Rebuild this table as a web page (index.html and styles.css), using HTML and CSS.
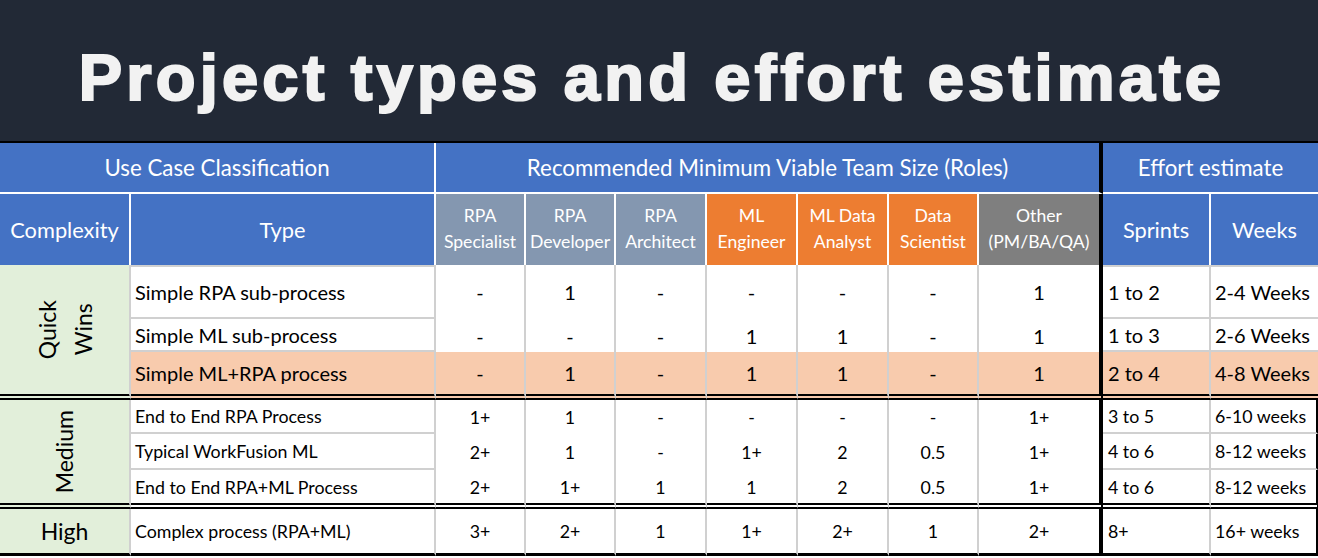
FILE: index.html
```html
<!DOCTYPE html>
<html lang="en">
<head>
<meta charset="utf-8">
<title>Project types and effort estimate</title>
<link rel="stylesheet" href="styles.css">
</head>
<body>
<div class="slide">
  <header class="title-bar">
    <h1 class="title">Project types and effort estimate</h1>
  </header>
  <div class="sheet">
    <div class="hd hd-top hd-class">Use Case Classification</div>
    <div class="hd hd-top hd-team">Recommended Minimum Viable Team Size (Roles)</div>
    <div class="hd hd-top hd-effort">Effort estimate</div>

    <div class="hd hd-sub big">Complexity</div>
    <div class="hd hd-sub big">Type</div>
    <div class="hd hd-sub role rpa">RPA<br>Specialist</div>
    <div class="hd hd-sub role rpa">RPA<br>Developer</div>
    <div class="hd hd-sub role rpa">RPA<br>Architect</div>
    <div class="hd hd-sub role ml">ML<br>Engineer</div>
    <div class="hd hd-sub role ml">ML Data<br>Analyst</div>
    <div class="hd hd-sub role ml">Data<br>Scientist</div>
    <div class="hd hd-sub role oth other">Other<br>(PM/BA/QA)</div>
    <div class="hd hd-sub big">Sprints</div>
    <div class="hd hd-sub big last-col">Weeks</div>

    <div class="cx cx-qw"><span class="vert">Quick<br>Wins</span></div>
    <div class="cx cx-med"><span class="vert">Medium</span></div>
    <div class="cx cx-high">High</div>

    <div class="row first">
      <div class="cell type">Simple RPA sub-process</div>
      <div class="cell">-</div><div class="cell">1</div><div class="cell">-</div><div class="cell">-</div><div class="cell">-</div><div class="cell">-</div><div class="cell other">1</div>
      <div class="cell spr">1 to 2</div><div class="cell wk">2-4 Weeks</div>
    </div>
    <div class="row">
      <div class="cell type">Simple ML sub-process</div>
      <div class="cell">-</div><div class="cell">-</div><div class="cell">-</div><div class="cell">1</div><div class="cell">1</div><div class="cell">-</div><div class="cell other">1</div>
      <div class="cell spr">1 to 3</div><div class="cell wk">2-6 Weeks</div>
    </div>
    <div class="row peach end">
      <div class="cell type">Simple ML+RPA process</div>
      <div class="cell">-</div><div class="cell">1</div><div class="cell">-</div><div class="cell">1</div><div class="cell">1</div><div class="cell">-</div><div class="cell other">1</div>
      <div class="cell spr">2 to 4</div><div class="cell wk">4-8 Weeks</div>
    </div>
    <div class="row small boxed">
      <div class="cell type">End to End RPA Process</div>
      <div class="cell">1+</div><div class="cell">1</div><div class="cell">-</div><div class="cell">-</div><div class="cell">-</div><div class="cell">-</div><div class="cell other">1+</div>
      <div class="cell spr">3 to 5</div><div class="cell wk">6-10 weeks</div>
    </div>
    <div class="row small boxed">
      <div class="cell type">Typical WorkFusion ML</div>
      <div class="cell">2+</div><div class="cell">1</div><div class="cell">-</div><div class="cell">1+</div><div class="cell">2</div><div class="cell">0.5</div><div class="cell other">1+</div>
      <div class="cell spr">4 to 6</div><div class="cell wk">8-12 weeks</div>
    </div>
    <div class="row small boxed end">
      <div class="cell type">End to End RPA+ML Process</div>
      <div class="cell">2+</div><div class="cell">1+</div><div class="cell">1</div><div class="cell">1</div><div class="cell">2</div><div class="cell">0.5</div><div class="cell other">1+</div>
      <div class="cell spr">4 to 6</div><div class="cell wk">8-12 weeks</div>
    </div>
    <div class="row small boxed last">
      <div class="cell type">Complex process (RPA+ML)</div>
      <div class="cell">3+</div><div class="cell">2+</div><div class="cell">1</div><div class="cell">1+</div><div class="cell">2+</div><div class="cell">1</div><div class="cell other">2+</div>
      <div class="cell spr">8+</div><div class="cell wk">16+ weeks</div>
    </div>
  </div>
</div>
</body>
</html>
```
FILE: styles.css
```css
html, body {
  margin: 0;
  padding: 0;
  background: #ffffff;
}

.slide {
  width: 1318px;
  height: 558px;
  overflow: hidden;
  background: #ffffff;
}

.title-bar {
  box-sizing: border-box;
  height: 143px;
  background: #222936;
  border-bottom: 2px solid #000000;
  display: flex;
  align-items: center;
  justify-content: center;
  padding-top: 14px;
  padding-right: 14px;
}

.title {
  margin: 0;
  font-family: "Liberation Sans", Arial, sans-serif;
  font-weight: 700;
  font-size: 65px;
  letter-spacing: 4.2px;
  color: #f2f2f2;
  -webkit-text-stroke: 2.2px #f2f2f2;
  line-height: 1;
  white-space: nowrap;
}

.sheet {
  display: grid;
  grid-template-columns: 131px 305px 90px 90px 91px 91px 91px 90px 124px 108px 107px;
  grid-template-rows: 51px 71px 54px 33px 48px 34px 36px 39px 47px;
  font-family: Lato, "Noto Sans", sans-serif;
  color: #000000;
}

/* header */
.hd {
  box-sizing: border-box;
  display: flex;
  align-items: center;
  justify-content: center;
  text-align: center;
  color: #ffffff;
  background: #4472c4;
  border-right: 2px solid #ffffff;
}

.hd-top {
  font-size: 22.3px;
  border-bottom: 2px solid #ffffff;
  padding-bottom: 1px;
}

.hd-class { grid-column: 1 / span 2; }
.hd-team { grid-column: 3 / span 7; border-right: 4px solid #000000; }
.hd-effort { grid-column: 10 / span 2; border-right: 0; }

.hd-sub.big {
  font-size: 21.8px;
}

.hd-sub.role {
  font-size: 17.6px;
  line-height: 26px;
  padding-bottom: 1px;
}

.hd-sub.rpa { background: #8497b0; }
.hd-sub.ml { background: #ed7d31; }
.hd-sub.oth { background: #7f7f7f; }
.hd-sub.other { border-right: 4px solid #000000; }
.hd-sub.last-col { border-right: 0; }

/* complexity column */
.cx {
  box-sizing: border-box;
  grid-column: 1;
  background: #e2efda;
  border-right: 2px solid #d0d0d0;
  display: flex;
  align-items: center;
  justify-content: center;
  font-size: 23px;
  line-height: 31px;
  text-align: center;
}

.cx-qw {
  grid-row: 3 / span 3;
  border-bottom: 6px double #000000;
  line-height: 36px;
}

.cx-med {
  grid-row: 6 / span 3;
  border-bottom: 6px double #000000;
}

.cx-high {
  grid-row: 9;
  border-bottom: 3px solid #000000;
}

.vert {
  writing-mode: vertical-rl;
  transform: rotate(180deg);
}

/* data rows */
.row { display: contents; }

.cell {
  box-sizing: border-box;
  display: flex;
  align-items: center;
  justify-content: center;
  font-size: 20px;
  border-right: 2px solid #d0d0d0;
  white-space: nowrap;
}

.row.small .cell { font-size: 17.8px; }

.cell.type,
.cell.spr,
.cell.wk {
  justify-content: flex-start;
  padding-left: 4px;
  border-bottom: 2px solid #d0d0d0;
}

.cell.spr { padding-left: 5px; }

.row.first .type,
.row.first .spr,
.row.first .wk {
  border-top: 2px solid #d0d0d0;
}

.cell.other { border-right: 4px solid #000000; }
.cell.wk { border-right: 0; }
.row.boxed .cell.wk { border-right: 2px solid #000000; }

.row.peach .cell { background: #f8cbad; }

.row.end .cell { border-bottom: 6px double #000000; }
.row.last .cell { border-bottom: 3px solid #000000; }
```
